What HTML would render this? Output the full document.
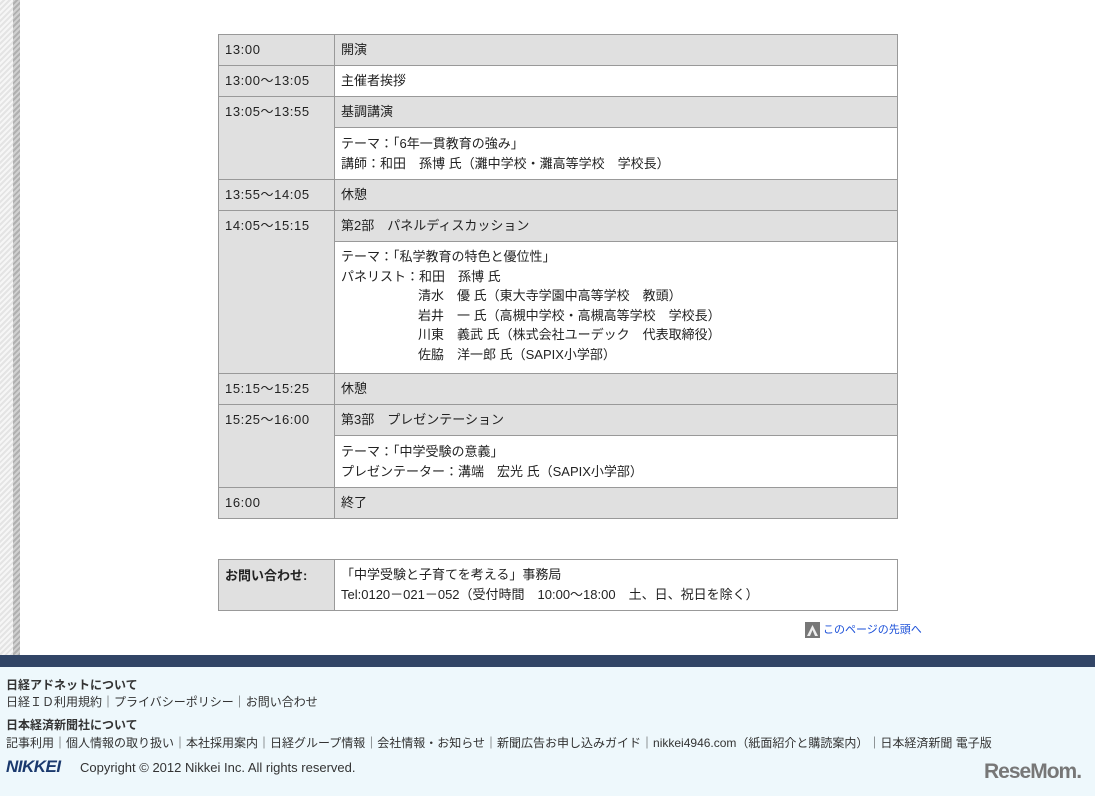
<!DOCTYPE html><html><head><meta charset="utf-8"><style>
*{margin:0;padding:0;box-sizing:border-box}
body{width:1095px;height:796px;position:relative;background:#fff;font-family:"Liberation Sans","Noto Sans CJK JP",sans-serif;font-size:13px;color:#222;overflow:hidden}
.strip{position:absolute;left:0;top:0;width:20px;height:655px;background:repeating-linear-gradient(135deg,#f6f6f6 0 2px,#e4e4e4 2px 4px)}
.strip:after{content:"";position:absolute;left:13px;top:0;width:7px;height:100%;background:repeating-linear-gradient(135deg,#d0d0d0 0 2px,#b0b0b0 2px 4px)}
.c{position:absolute;border:1px solid #999;padding:5px 6px;line-height:19.5px;white-space:nowrap}
.t{letter-spacing:0.6px}
.g{background:#e0e0e0}.w{background:#fff}
.foot{position:absolute;left:0;top:655px;width:1095px;height:141px;background:#eef8fc}
.band{position:absolute;left:0;top:655px;width:1095px;height:12px;background:#314566}
.f{position:absolute;left:6px;font-size:12px;color:#333;white-space:nowrap}
.b{font-weight:bold}
</style></head><body>
<div class="strip"></div>
<div class="c g t" style="left:218px;top:34px;width:117px;height:32px">13:00</div>
<div class="c g t" style="left:218px;top:65px;width:117px;height:32px">13:00〜13:05</div>
<div class="c g t" style="left:218px;top:96px;width:117px;height:84px">13:05〜13:55</div>
<div class="c g t" style="left:218px;top:179px;width:117px;height:32px">13:55〜14:05</div>
<div class="c g t" style="left:218px;top:210px;width:117px;height:164px">14:05〜15:15</div>
<div class="c g t" style="left:218px;top:373px;width:117px;height:32px">15:15〜15:25</div>
<div class="c g t" style="left:218px;top:404px;width:117px;height:84px">15:25〜16:00</div>
<div class="c g t" style="left:218px;top:487px;width:117px;height:32px">16:00</div>
<div class="c g" style="left:334px;top:34px;width:564px;height:32px">開演</div>
<div class="c w" style="left:334px;top:65px;width:564px;height:32px">主催者挨拶</div>
<div class="c g" style="left:334px;top:96px;width:564px;height:32px">基調講演</div>
<div class="c w" style="left:334px;top:127px;width:564px;height:53px;padding-top:6px">テーマ：「6年一貫教育の強み」<br>講師：和田　孫博 氏（灘中学校・灘高等学校　学校長）</div>
<div class="c g" style="left:334px;top:179px;width:564px;height:32px">休憩</div>
<div class="c g" style="left:334px;top:210px;width:564px;height:32px">第2部　パネルディスカッション</div>
<div class="c w" style="left:334px;top:241px;width:564px;height:133px;padding-top:5px">テーマ：「私学教育の特色と優位性」<br>パネリスト：和田　孫博 氏<br><span style="padding-left:77px">清水　優 氏（東大寺学園中高等学校　教頭）</span><br><span style="padding-left:77px">岩井　一 氏（高槻中学校・高槻高等学校　学校長）</span><br><span style="padding-left:77px">川東　義武 氏（株式会社ユーデック　代表取締役）</span><br><span style="padding-left:77px">佐脇　洋一郎 氏（SAPIX小学部）</span></div>
<div class="c g" style="left:334px;top:373px;width:564px;height:32px">休憩</div>
<div class="c g" style="left:334px;top:404px;width:564px;height:32px">第3部　プレゼンテーション</div>
<div class="c w" style="left:334px;top:435px;width:564px;height:53px;padding-top:6px">テーマ：「中学受験の意義」<br>プレゼンテーター：溝端　宏光 氏（SAPIX小学部）</div>
<div class="c g" style="left:334px;top:487px;width:564px;height:32px">終了</div>
<div class="c g b" style="left:218px;top:559px;width:117px;height:52px;padding-top:6px">お問い合わせ:</div>
<div class="c w" style="left:334px;top:559px;width:564px;height:52px;padding-top:5px">「中学受験と子育てを考える」事務局<br>Tel:0120－021－052（受付時間　10:00〜18:00　土、日、祝日を除く）</div>
<div style="position:absolute;left:805px;top:622px;width:15px;height:16px;background:#777"><svg width="15" height="16"><path d="M2 14 L7.5 3 L13 14 L10 14 L7.5 8 L5 14Z" fill="#eee"/></svg></div>
<div style="position:absolute;left:823px;top:622px;font-size:11px;color:#1a4fd8;line-height:16px">このページの先頭へ</div>
<div class="foot"></div><div class="band"></div>
<div class="f b" style="top:676px">日経アドネットについて</div>
<div class="f" style="top:693px">日経ＩＤ利用規約｜プライバシーポリシー｜お問い合わせ</div>
<div class="f b" style="top:716px">日本経済新聞社について</div>
<div class="f" style="top:734px">記事利用｜個人情報の取り扱い｜本社採用案内｜日経グループ情報｜会社情報・お知らせ｜新聞広告お申し込みガイド｜nikkei4946.com（紙面紹介と購読案内）｜日本経済新聞 電子版</div>
<div class="f" style="top:757px;font-size:17px;font-weight:bold;font-style:italic;color:#1b3a6e;letter-spacing:-0.5px">NIKKEI</div>
<div class="f" style="top:760px;left:80px;font-size:13px">Copyright © 2012 Nikkei Inc. All rights reserved.</div>
<div style="position:absolute;left:984px;top:760px;font-size:21px;font-weight:bold;color:#777;letter-spacing:-1px">ReseMom.</div>
</body></html>
